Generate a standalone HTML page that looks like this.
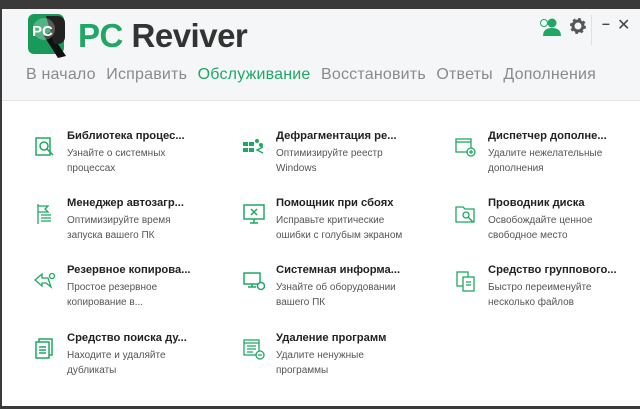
<!DOCTYPE html>
<html><head><meta charset="utf-8"><style>
*{margin:0;padding:0;box-sizing:border-box}
body{width:640px;height:409px;overflow:hidden;background:#3a3a3a;font-family:"Liberation Sans","DejaVu Sans",sans-serif;position:relative}
.win{position:absolute;left:2px;top:9px;width:638px;height:397px;background:#fff}
.hdr{position:absolute;left:0;top:0;width:638px;height:92px;background:#f5f6f7;border-bottom:1px solid #e2e4e6}
.logo{position:absolute;left:26px;top:5px;width:40px;height:44px}
.brand{position:absolute;left:76px;top:8px;font-size:33px;font-weight:bold;letter-spacing:-0.5px;color:#333}
.brand b{color:#1fa865}
.nav{position:absolute;left:24px;top:57px;font-size:16px;color:#8a8a8a;white-space:nowrap;letter-spacing:0.2px}
.nav span{margin-right:10.5px}
.nav .on{color:#1fa865}
.it{position:absolute;width:200px}
.it .ic{position:absolute;left:0;top:6px;width:22px;height:22px}
.it h{position:absolute;left:33px;top:0;font-size:11.2px;font-weight:bold;color:#222;white-space:nowrap;display:block}
.it p{position:absolute;left:33px;top:16px;font-size:10px;color:#555;line-height:15px;white-space:nowrap}
.tb{position:absolute;top:8px;font-size:14px;color:#444;font-weight:bold}
</style></head><body>
<div class="win">
<div class="hdr">
<svg class="logo" viewBox="0 0 40 44"><rect x="0" y="0" width="36" height="40" rx="6" fill="#1a9a5a"/><path d="M22 18 L38 42 L30 44 L16 22Z" fill="#111"/><path d="M18 2 h12 a7 7 0 0 1 7 7 v14 a7 7 0 0 1 -7 7 h-4z" fill="#222"/><circle cx="16" cy="15" r="11" fill="#fff" opacity=".25"/><text x="4" y="22" font-size="15" fill="#fff" font-family="Liberation Sans" font-weight="bold">PC</text></svg>
<div class="brand"><b>PC</b> Reviver</div>
<div class="nav"><span>В начало</span><span>Исправить</span><span class="on">Обслуживание</span><span>Восстановить</span><span>Ответы</span><span>Дополнения</span></div>
<svg style="position:absolute;left:537px;top:8px" width="22" height="20" viewBox="0 0 22 20"><circle cx="13" cy="6" r="4.5" fill="#1fa865"/><path d="M4 19 q0-8 9-8 q9 0 9 8z" fill="#1fa865"/><circle cx="5" cy="6" r="3.5" fill="none" stroke="#1fa865" stroke-width="1"/></svg>
<svg style="position:absolute;left:567px;top:8px" width="18" height="18" viewBox="0 0 18 18"><circle cx="9" cy="9" r="6" fill="none" stroke="#555" stroke-width="4" stroke-dasharray="2.4 2.3"/><circle cx="9" cy="9" r="5" fill="none" stroke="#555" stroke-width="3"/></svg>
<div style="position:absolute;left:589px;top:6px;width:1px;height:30px;background:#e0e0e0"></div>
<div class="tb" style="left:600px;top:6px">–</div>
<div class="tb" style="left:615px;top:6px;font-size:16px">✕</div>
</div>
</div>
<div style="position:absolute;left:0;top:0;width:640px;height:409px">
<div class="it" style="left:34px;top:130px"><svg class="ic" viewBox="0 0 22 22" fill="none" stroke="#1fa865" stroke-width="1.5"><rect x="2" y="2" width="14" height="17"/><circle cx="10" cy="10" r="4"/><path d="M13 13l6 6"/></svg><h>Библиотека процес...</h><p>Узнайте о системных<br>процессах</p></div>
<div class="it" style="left:243px;top:130px"><svg class="ic" viewBox="0 0 22 22" fill="#1fa865"><rect x="0" y="6" width="5" height="4"/><rect x="6" y="6" width="5" height="4"/><rect x="0" y="12" width="5" height="4"/><rect x="6" y="12" width="5" height="4"/><circle cx="14" cy="5" r="2"/><circle cx="18" cy="9" r="2"/><path d="M20 11l-6 3 6 3" fill="none" stroke="#1fa865" stroke-width="1.5"/></svg><h>Дефрагментация ре...</h><p>Оптимизируйте реестр<br>Windows</p></div>
<div class="it" style="left:455px;top:130px"><svg class="ic" viewBox="0 0 22 22" fill="none" stroke="#1fa865" stroke-width="1.3"><rect x="1" y="3" width="15" height="13"/><path d="M1 6h15"/><circle cx="16" cy="16" r="4" fill="#fff"/><path d="M16 14v4M14 16h4"/></svg><h>Диспетчер дополне...</h><p>Удалите нежелательные<br>дополнения</p></div>

<div class="it" style="left:34px;top:197px"><svg class="ic" viewBox="0 0 22 22" fill="none" stroke="#1fa865" stroke-width="1.3"><path d="M4 1v20M4 3h10l-3 3 3 3H4M7 12h10M7 15h10M7 18h10"/></svg><h>Менеджер автозагр...</h><p>Оптимизируйте время<br>запуска вашего ПК</p></div>
<div class="it" style="left:243px;top:197px"><svg class="ic" viewBox="0 0 22 22" fill="none" stroke="#1fa865" stroke-width="1.5"><rect x="1" y="2" width="20" height="14"/><path d="M7 20h8M11 16v4M8 6l6 6M14 6l-6 6"/></svg><h>Помощник при сбоях</h><p>Исправьте критические<br>ошибки с голубым экраном</p></div>
<div class="it" style="left:455px;top:197px"><svg class="ic" viewBox="0 0 22 22" fill="none" stroke="#1fa865" stroke-width="1.3"><path d="M1 4h7l2 2h9v13H1z"/><circle cx="11" cy="12" r="3"/><path d="M13 14l5 5"/></svg><h>Проводник диска</h><p>Освобождайте ценное<br>свободное место</p></div>

<div class="it" style="left:34px;top:264px"><svg class="ic" viewBox="0 0 22 22" fill="none" stroke="#1fa865" stroke-width="1.3"><path d="M1 10l7-6v4h6l3 9-5-4H8v3z"/><circle cx="18" cy="6" r="2.5"/></svg><h>Резервное копирова...</h><p>Простое резервное<br>копирование в...</p></div>
<div class="it" style="left:243px;top:264px"><svg class="ic" viewBox="0 0 22 22" fill="none" stroke="#1fa865" stroke-width="1.5"><rect x="1" y="3" width="16" height="11"/><path d="M5 17h8M9 14v3"/><circle cx="18" cy="16" r="3.5" fill="#fff"/></svg><h>Системная информа...</h><p>Узнайте об оборудовании<br>вашего ПК</p></div>
<div class="it" style="left:455px;top:264px"><svg class="ic" viewBox="0 0 22 22" fill="none" stroke="#1fa865" stroke-width="1.3"><rect x="2" y="2" width="11" height="14"/><rect x="8" y="7" width="11" height="14" fill="#fff"/><path d="M11 12h5M11 15h5"/></svg><h>Средство группового...</h><p>Быстро переименуйте<br>несколько файлов</p></div>

<div class="it" style="left:34px;top:332px"><svg class="ic" viewBox="0 0 22 22" fill="none" stroke="#1fa865" stroke-width="1.5"><rect x="5" y="1" width="13" height="16"/><rect x="2" y="4" width="13" height="16" fill="#fff"/><path d="M5 9h7M5 12h7M5 15h7"/></svg><h>Средство поиска ду...</h><p>Находите и удаляйте<br>дубликаты</p></div>
<div class="it" style="left:243px;top:332px"><svg class="ic" viewBox="0 0 22 22" fill="none" stroke="#1fa865" stroke-width="1.3"><rect x="1" y="2" width="15" height="15"/><path d="M1 5h15M4 8h9M4 11h9M4 14h6"/><circle cx="17" cy="17" r="4" fill="#fff"/><path d="M15 17h4"/></svg><h>Удаление программ</h><p>Удалите ненужные<br>программы</p></div>
</div>
</body></html>
